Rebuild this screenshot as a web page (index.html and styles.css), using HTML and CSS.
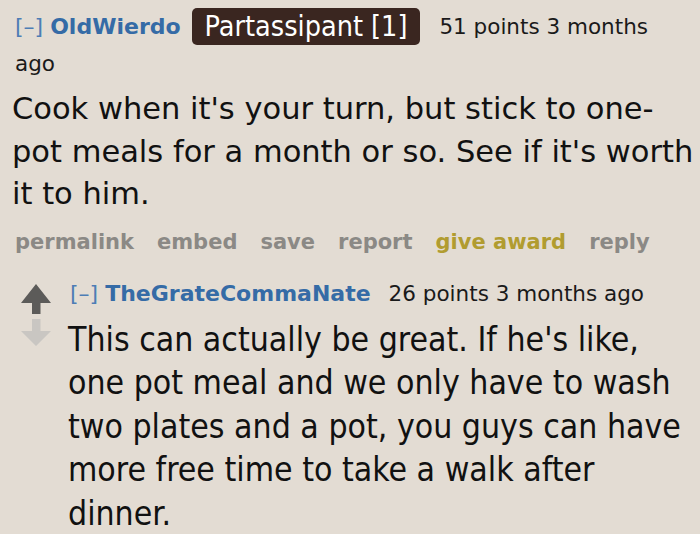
FILE: index.html
```html
<!DOCTYPE html>
<html>
<head>
<meta charset="utf-8">
<link rel="stylesheet" href="styles.css">
</head>
<body>
<div class="comment">
  <div class="tagline top">
    <span class="expand">[–]</span><span class="author">OldWierdo</span><span class="flair">Partassipant [1]</span><span class="score">51 points</span> <span class="time">3 months</span> <span class="time">ago</span>
  </div>
  <div class="body">Cook when it's your turn, but stick to one-pot meals for a month or so. See if it's worth it to him.</div>
  <div class="buttons">
    <span class="btn">permalink</span>
    <span class="btn">embed</span>
    <span class="btn">save</span>
    <span class="btn">report</span>
    <span class="btn award">give award</span>
    <span class="btn">reply</span>
  </div>
  <div class="child">
    <div class="votes">
      <svg class="arrow" width="30" height="30" viewBox="0 0 30 30"><path d="M15 0 L30 19 L19.5 19 L19.5 30 L11 30 L11 19 L0 19 Z" fill="#5c5b59"/></svg>
      <svg class="arrow" width="30" height="27" viewBox="0 0 30 27"><path d="M11 0 L19.5 0 L19.5 12 L30 12 L15 27 L0 12 L11 12 Z" fill="#c9c6c2"/></svg>
    </div>
    <div class="entry">
      <div class="tagline small">
        <span class="expand">[–]</span><span class="author gap">TheGrateCommaNate</span><span class="score">26 points</span> <span class="time">3 months ago</span>
      </div>
      <div class="body2">This can actually be great. If he's like, one pot meal and we only have to wash two plates and a pot, you guys can have more free time to take a walk after dinner.</div>
    </div>
  </div>
</div>
</body>
</html>
```

FILE: styles.css
```css
html, body {
  margin: 0;
  padding: 0;
  background: #e3dcd3;
}
body {
  font-family: "DejaVu Sans", Verdana, sans-serif;
  color: #111;
}
.comment {
  padding: 8px 0 0 12px;
}
.tagline {
  font-size: 21.5px;
  line-height: 37px;
  color: #1a1a1a;
}
.tagline.top {
  padding-left: 3px;
  padding-right: 16px;
}
.expand {
  color: #4d7db5;
  font-size: 22px;
  margin-right: 7px;
}
.author {
  color: #356ba6;
  font-weight: bold;
  font-size: 22px;
}
.author.gap {
  margin-right: 18px;
}
.flair {
  display: inline-block;
  vertical-align: top;
  background: #3a2620;
  color: #fff;
  font-family: "DejaVu Sans Condensed", "DejaVu Sans", sans-serif;
  font-stretch: condensed;
  font-size: 28.5px;
  line-height: 37px;
  padding: 0 13px;
  border-radius: 5px;
  margin: 0 19px 0 11px;
}
.body {
  font-size: 30.5px;
  line-height: 42.5px;
  margin-top: 6px;
  color: #111;
}
.buttons {
  margin-top: 12px;
  font-size: 21px;
  line-height: 28px;
  font-weight: bold;
  color: #8b8985;
  display: flex;
  gap: 23px;
  padding-left: 3px;
}
.award {
  color: #b19c30;
}
.child {
  display: flex;
  margin-top: 20px;
  gap: 17px;
  padding-left: 9px;
}
.votes {
  display: flex;
  flex-direction: column;
  gap: 5px;
  padding-top: 8px;
  flex: none;
}
.arrow {
  display: block;
}
.entry {
  flex: 1;
  min-width: 0;
}
.tagline.small {
  line-height: 36px;
  padding-left: 2px;
}
.body2 {
  font-family: "DejaVu Sans Condensed", "DejaVu Sans", sans-serif;
  font-stretch: condensed;
  font-size: 33.5px;
  line-height: 43.5px;
  margin-top: 6px;
  color: #111;
}
```
